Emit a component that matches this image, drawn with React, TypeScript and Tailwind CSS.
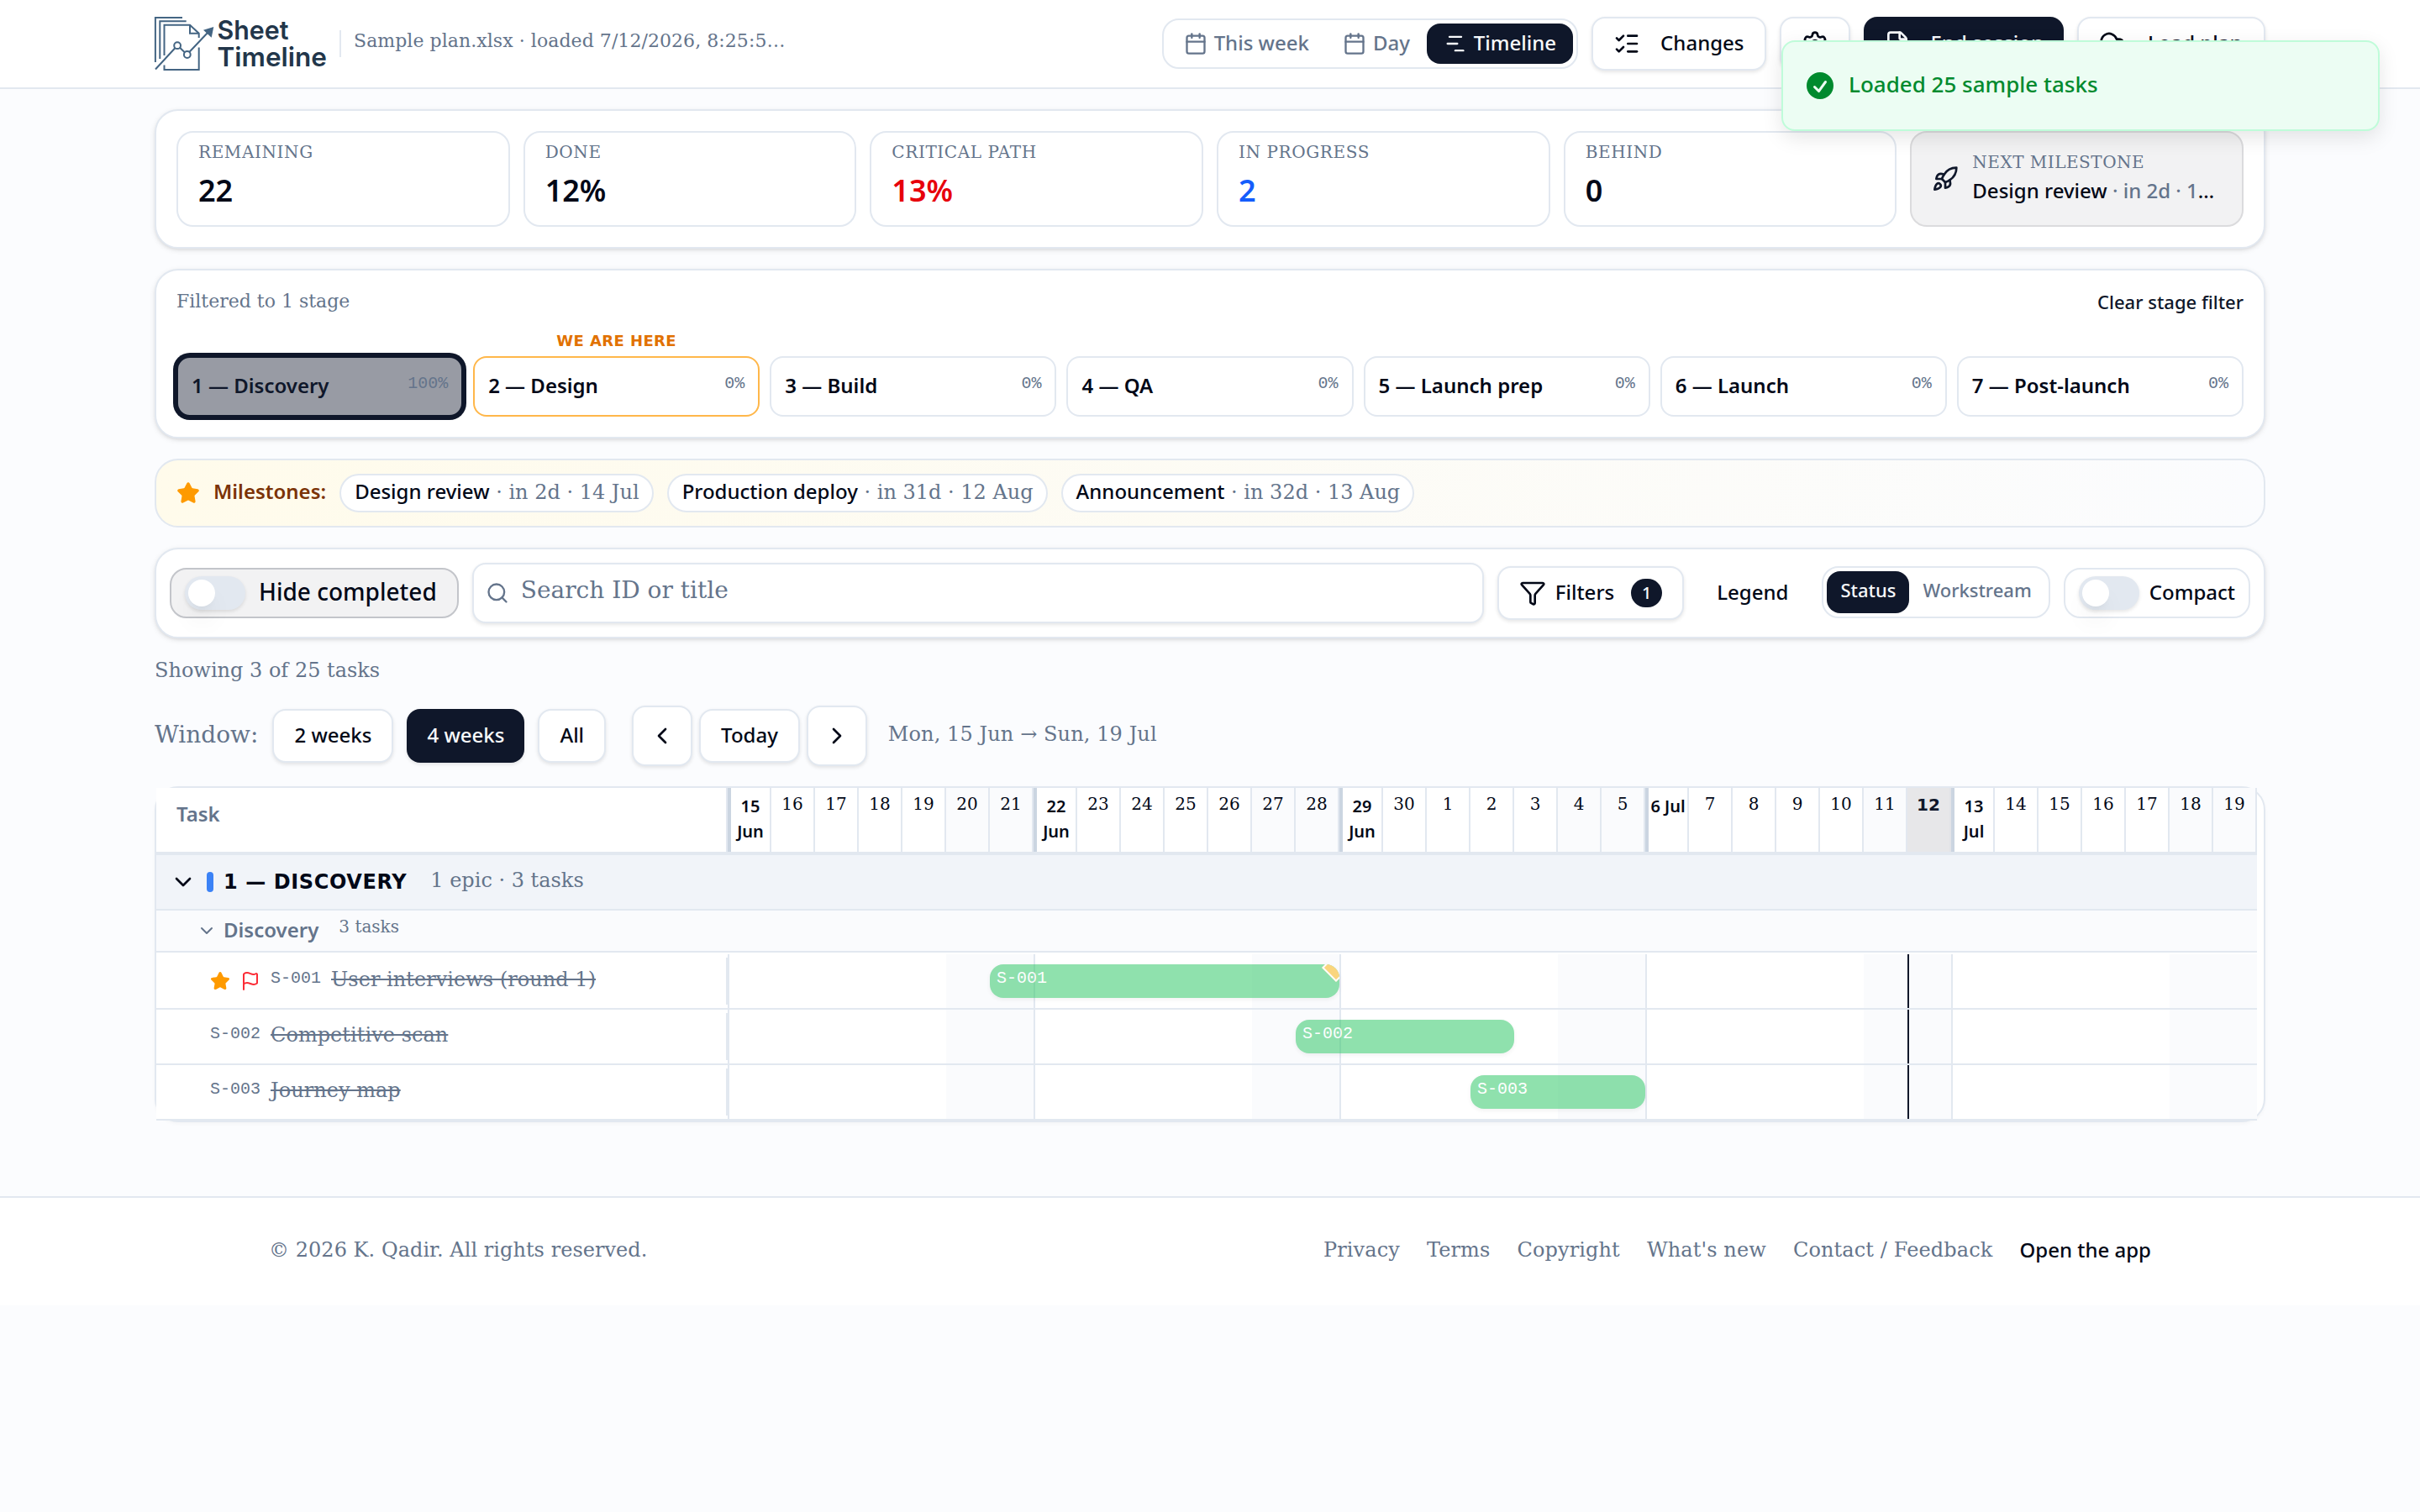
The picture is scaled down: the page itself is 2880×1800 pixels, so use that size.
import React from 'react';
import {
  Calendar, ChartNoAxesGantt, ListChecks, Settings, FileX, CloudUpload, Rocket, Star,
  Search, Funnel, ChevronLeft, ChevronRight, ChevronDown, Flag,
} from 'lucide-react';

const SERIF = "font-['DejaVu_Serif',serif]";
const MONO = "font-['Liberation_Mono',monospace]";
const BOLD = "font-['DejaVu_Sans',sans-serif] font-bold";

function Logo() {
  return (
    <svg width="204" height="64" viewBox="0 0 204 64" className="shrink-0 overflow-visible" fill="none" stroke="#446583" strokeWidth="2">
      <path d="M.9 54V.9H33" />
      <path d="M6.3 50V5.2h31.4" />
      <path d="M11.5 46V9.7h30.5l10.7 10V25" />
      <path d="M42 9.7v10h10.7" />
      <path d="M11.5 57.5v5.6h41.2V36.5" />
      <path d="M1 62.5 24.5 37M29.8 36.6l6.2 5.8M41.5 41.8 64 18" />
      <circle cx="27.1" cy="34.2" r="3.9" />
      <circle cx="38.8" cy="45" r="3.9" />
      <path d="m70.3 12-12.3 3.7 9.7 9z" fill="#446583" stroke="none" />
      <text x="74.5" y="27" fontFamily="Inter, sans-serif" fontSize="31.5" fontWeight="600" fill="#22364a" stroke="none" textLength="85" lengthAdjust="spacingAndGlyphs">Sheet</text>
      <text x="74.5" y="58.8" fontFamily="Inter, sans-serif" fontSize="31.5" fontWeight="600" fill="#22364a" stroke="none" textLength="130.5" lengthAdjust="spacingAndGlyphs">Timeline</text>
    </svg>
  );
}

function Header() {
  return (
    <header className="h-[106px] border-b-2 border-[#e2e8f0] bg-white">
      <div className="mx-auto flex h-[104px] w-[2512px] items-center justify-between">
        <div className="flex items-center gap-4">
          <Logo />
          <div className="h-8 w-0.5 bg-[#e2e8f0]" />
          <div className={`-ml-px pb-[7px] text-[22px] leading-8 tracking-[0.06px] whitespace-nowrap text-[#64748b] ${SERIF}`}>Sample plan.xlsx · loaded 7/12/2026, 8:25:5…</div>
        </div>
        <div className="flex items-center gap-4 font-medium">
          <div className="flex h-[60px] rounded-[20px] border-2 border-[#e2e8f0] p-1 text-[#64748b]">
            <div className="flex items-center gap-2 px-5"><Calendar size={28} /><span className="pb-[2px]">This week</span></div>
            <div className="flex items-center gap-2 px-5"><Calendar size={28} /><span className="pb-[2px]">Day</span></div>
            <div className="flex items-center gap-2 rounded-2xl bg-[#0f172a] px-5 text-[#f8fafc]"><ChartNoAxesGantt size={28} /><span className="pb-[2px]">Timeline</span></div>
          </div>
          <div className="flex h-16 items-center gap-6 rounded-2xl border-2 border-[#e2e8f0] bg-white px-6 shadow-[0_2px_4px_rgba(0,0,0,0.1)]"><ListChecks size={32} /><span className="pb-[2px]">Changes</span></div>
          <div className="flex h-16 items-center rounded-2xl border-2 border-[#e2e8f0] bg-white px-6 shadow-[0_2px_4px_rgba(0,0,0,0.1)]"><Settings size={32} /></div>
          <div className="flex h-16 items-center gap-6 rounded-2xl bg-[#0f172a] px-6 text-[#f8fafc] shadow-[0_2px_4px_rgba(0,0,0,0.1)]"><FileX size={32} /><span className="pb-[2px]">End session</span></div>
          <div className="flex h-16 w-[224px] items-center gap-[26px] rounded-2xl border-2 border-[#e2e8f0] bg-white px-6 shadow-[0_2px_4px_rgba(0,0,0,0.1)]"><CloudUpload size={32} className="shrink-0" /><span className="pb-[2px] whitespace-nowrap">Load plan</span></div>
        </div>
      </div>
    </header>
  );
}

function Toast() {
  return (
    <div className="absolute top-[48px] right-[48px] flex h-[108px] w-[712px] items-center rounded-2xl border-2 border-[#bffcd9] bg-[#ecfdf3] pl-6 text-[#008a2e] shadow-[0_8px_24px_rgba(0,0,0,0.1)]">
      <svg width="40" height="40" viewBox="0 0 20 20" fill="currentColor">
        <path fillRule="evenodd" clipRule="evenodd" d="M10 18a8 8 0 100-16 8 8 0 000 16zm3.857-9.809a.75.75 0 00-1.214-.882l-3.483 4.79-1.88-1.88a.75.75 0 10-1.06 1.061l2.5 2.5a.75.75 0 001.137-.089l4-5.5z" />
      </svg>
      <span className="ml-[14px] pb-[4px] text-[26px] leading-[39px] font-medium">Loaded 25 sample tasks</span>
    </div>
  );
}

const CARD = 'rounded-[28px] border-2 border-[#e2e8f0] bg-white shadow-[0_2px_6px_rgba(0,0,0,0.1),0_2px_4px_-2px_rgba(0,0,0,0.1)]';

const stats = [
  { label: 'REMAINING', value: '22', color: 'text-[#020817]' },
  { label: 'DONE', value: '12%', color: 'text-[#020817]' },
  { label: 'CRITICAL PATH', value: '13%', color: 'text-[#e7000b]' },
  { label: 'IN PROGRESS', value: '2', color: 'text-[#155dfc]' },
  { label: 'BEHIND', value: '0', color: 'text-[#020817]' },
];

function Stats() {
  return (
    <section className={`grid grid-cols-6 gap-4 p-6 ${CARD}`}>
      {stats.map((s) => (
        <div key={s.label} className="h-[114px] rounded-[20px] border-2 border-[#e2e8f0] px-6 pt-2">
          <div className={`text-[20px] leading-[30px] tracking-[0.6px] text-[#64748b] ${SERIF}`}>{s.label}</div>
          <div className={`mt-[3px] text-[36px] leading-[56px] font-semibold ${s.color}`}>{s.value}</div>
        </div>
      ))}
      <div className="flex h-[114px] items-center gap-4 rounded-[20px] border-2 border-[#dbdbdd] bg-[#f2f2f3] px-6">
        <Rocket size={32} className="shrink-0 text-[#0f172a]" />
        <div className="pb-[3px]">
          <div className={`text-[20px] leading-[30px] tracking-[0.5px] text-[#64748b] ${SERIF}`}>NEXT MILESTONE</div>
          <div className="pt-px leading-9 font-medium whitespace-nowrap">Design review <span className="text-[#64748b]">· in 2d · 1</span>…</div>
        </div>
      </div>
    </section>
  );
}

const stages = ['1 — Discovery', '2 — Design', '3 — Build', '4 — QA', '5 — Launch prep', '6 — Launch', '7 — Post-launch'];

function Stages() {
  return (
    <section className={`h-[202px] px-6 pt-6 ${CARD}`}>
      <div className="flex h-7 items-center justify-between text-[22px]">
        <span className={`pb-[3px] text-[#64748b] ${SERIF}`}>Filtered to 1 stage</span>
        <span className="pb-[2px] font-medium text-[#0f172a]">Clear stage filter</span>
      </div>
      <div className="mt-5 grid grid-cols-7 gap-3">
        {stages.map((s, i) => (
          <div key={s}>
            <div className={`h-6 text-center text-[18px] leading-6 tracking-[0.4px] text-[#e17100] ${BOLD}`}>{i === 1 ? 'WE ARE HERE' : ''}</div>
            <div className={`mt-1.5 flex h-[72px] items-center justify-between rounded-2xl border-2 px-4 ${i === 0 ? 'border-[#0f172a] bg-[#989ba4] ring-4 ring-[#0f172a]' : i === 1 ? 'border-[#ffb74a]' : 'border-[#e2e8f0]'}`}>
              <span className={`pb-[2px] font-semibold ${i === 0 ? 'text-[#0f172a]' : ''}`}>{s}</span>
              <span className={`pb-[6px] text-[20px] text-[#64748b] ${MONO}`}>{i === 0 ? '100%' : '0%'}</span>
            </div>
          </div>
        ))}
      </div>
    </section>
  );
}

const milestones = [['Design review', 'in 2d · 14 Jul'], ['Production deploy', 'in 31d · 12 Aug'], ['Announcement', 'in 32d · 13 Aug']];

function Milestones() {
  return (
    <section className="flex h-[82px] items-center gap-4 rounded-[28px] border-2 border-[#e2e8f0] bg-linear-to-r from-[#fffbeb] to-[#fbfcfe] px-6">
      <Star size={28} fill="#fe9a00" className="text-[#fe9a00]" />
      <span className="pb-[4px] font-semibold text-[#7b3306]">Milestones:</span>
      {milestones.map(([name, when]) => (
        <div key={name} className="flex h-[46px] items-center rounded-full border-2 border-[#e2e8f0] bg-white pr-[15px] pl-4">
          <span className="pb-[3px] whitespace-pre"><span className="font-medium">{name}</span><span className={`text-[#64748b] ${SERIF}`}> · {when}</span></span>
        </div>
      ))}
    </section>
  );
}

function Switch() {
  return (
    <div className="flex h-10 w-[72px] items-center rounded-full bg-[#e2e8f0] p-1 shadow-[0_2px_4px_rgba(0,0,0,0.1)]">
      <div className="h-8 w-8 rounded-full bg-white shadow-[0_20px_30px_-6px_rgba(0,0,0,0.1),0_8px_12px_-8px_rgba(0,0,0,0.1)]" />
    </div>
  );
}

function Toolbar() {
  return (
    <section className={`flex h-[108px] items-center gap-4 px-4 font-medium ${CARD}`}>
      <div className="flex h-[60px] items-center gap-4 rounded-[20px] border-2 border-[#c3c5ca] bg-[#f2f2f3] pr-6 pl-4">
        <Switch />
        <span className="pb-[5px] text-[28px]">Hide completed</span>
      </div>
      <div className="flex h-[72px] grow items-center gap-[14px] rounded-2xl border-2 border-[#e2e8f0] bg-white pl-[14px] text-[#64748b] shadow-[0_2px_4px_rgba(0,0,0,0.1)]">
        <Search size={28} />
        <span className={`pb-[6px] text-[28px] font-normal ${SERIF}`}>Search ID or title</span>
      </div>
      <div className="-mr-px flex h-16 items-center rounded-2xl border-2 border-[#e2e8f0] bg-white px-6 shadow-[0_2px_4px_rgba(0,0,0,0.1)]">
        <Funnel size={32} />
        <span className="ml-[11px] pb-[2px]">Filters</span>
        <span className="ml-5 flex h-[34px] w-[37px] items-center justify-center rounded-full bg-[#0f172a] pb-px text-[20px] text-[#f8fafc]">1</span>
      </div>
      <div className="px-6 pb-[2px]">Legend</div>
      <div className="mb-[2px] flex h-[62px] rounded-[20px] border-2 border-[#e2e8f0] p-1 text-[22px] text-[#64748b]">
        <div className="flex items-center rounded-2xl bg-[#0f172a] px-4 text-[#f8fafc]"><span className="pb-[7px]">Status</span></div>
        <div className="flex items-center px-4"><span className="pb-[7px]">Workstream</span></div>
      </div>
      <div className="flex h-[60px] items-center gap-3 rounded-[20px] border-2 border-[#e2e8f0] px-4">
        <Switch />
        <span className="pb-[2px]">Compact</span>
      </div>
    </section>
  );
}

const BTN = 'flex items-center justify-center rounded-2xl border-2 border-[#e2e8f0] bg-white shadow-[0_2px_4px_rgba(0,0,0,0.1)]';

function WindowBar() {
  return (
    <div className="mt-6 flex h-[72px] items-center font-medium">
      <span className={`mr-[17px] pb-[2px] text-[28px] font-normal text-[#64748b] ${SERIF}`}>Window:</span>
      <div className={`mr-4 h-16 px-6 ${BTN}`}><span className="pb-[2px]">2 weeks</span></div>
      <div className="mr-4 flex h-16 items-center rounded-2xl bg-[#0f172a] px-6 text-[#f8fafc] shadow-[0_2px_4px_rgba(0,0,0,0.1)]"><span className="pb-[2px]">4 weeks</span></div>
      <div className={`mr-[31px] h-16 px-6 ${BTN}`}><span className="pb-[2px]">All</span></div>
      <div className={`mr-2 h-[72px] w-[72px] ${BTN}`}><ChevronLeft size={32} /></div>
      <div className={`mr-2 h-16 px-6 ${BTN}`}><span className="pb-[2px]">Today</span></div>
      <div className={`mr-6 h-[72px] w-[72px] ${BTN}`}><ChevronRight size={32} /></div>
      <span className={`pb-[4px] pl-px font-normal tracking-[0.1px] text-[#64748b] ${SERIF}`}>Mon, 15 Jun → Sun, 19 Jul</span>
    </div>
  );
}

const days = Array.from({ length: 35 }, (_, i) => ({
  i,
  label: i < 16 ? 15 + i : i - 15,
  month: i < 16 ? 'Jun' : 'Jul',
  monday: i % 7 === 0,
  weekend: i % 7 > 4,
  today: i === 27,
}));

const tasks = [
  { id: 'S-001', title: 'User interviews (round 1)', flagged: true, bar: 'ml-[312px] w-[416px]' },
  { id: 'S-002', title: 'Competitive scan', flagged: false, bar: 'ml-[676px] w-[260px]' },
  { id: 'S-003', title: 'Journey map', flagged: false, bar: 'ml-[884px] w-[208px]' },
];

function Timeline() {
  return (
    <section className="mt-6 h-[400px] rounded-[28px] border-2 border-[#e2e8f0] bg-white shadow-[0_2px_4px_rgba(0,0,0,0.03)]">
      <div className="w-[2500px]">
        <div className="flex h-20 border-b-4 border-[#e2e8f0] bg-white">
          <div className="w-[680px] border-r-2 border-[#e2e8f0] pt-[13px] pl-6 leading-9 font-semibold text-[#64748b]">Task</div>
          {days.map((d) => (
            <div
              key={d.i}
              className={`w-[52px] border-r-2 text-center text-[20px] leading-[30px] ${
                d.monday
                  ? 'border-r-[#e2e8f0] border-l-4 border-l-[#cbd5e1] pt-[7px] font-semibold'
                  : d.today
                    ? `border-r-[#e2e3e8] bg-[#e7e7e9] pt-[5px] text-[#0f172a] ${BOLD}`
                    : `border-[#e2e8f0] pt-1 ${SERIF} ${d.weekend ? 'bg-[#fafbfd]' : ''}`
              }`}
            >
              {d.monday ? `${d.label} ${d.month}` : d.label}
            </div>
          ))}
        </div>
        <div className="flex h-[66px] items-center border-b-2 border-[#e2e8f0] bg-[#f1f4f9] pl-4">
          <ChevronDown size={32} />
          <div className="ml-3 h-6 w-2 rounded bg-[#3b82f6]" />
          <span className={`ml-3 tracking-[0.6px] ${BOLD}`}>1 — DISCOVERY</span>
          <span className={`ml-7 pb-[4px] text-[#64748b] ${SERIF}`}>1 epic · 3 tasks</span>
        </div>
        <div className="flex h-[50px] items-center border-b-2 border-[#e2e8f0] bg-[#fafbfd] pl-12 text-[#64748b]">
          <ChevronDown size={24} />
          <span className="ml-2 pb-[3px] font-semibold">Discovery</span>
          <span className={`ml-6 pb-[10px] text-[20px] ${SERIF}`}>3 tasks</span>
        </div>
        <div className="pt-0.5">
          {tasks.map((t) => (
            <div key={t.id} className="flex h-[66px] border-b-2 border-[#e2e8f0] bg-white">
              <div className="mt-1 flex h-14 w-[680px] items-center gap-3 border-r-2 border-[#e2e8f0] pl-16 text-[#64748b]">
                {t.flagged && <Star size={24} fill="#fe9a00" className="text-[#fe9a00]" />}
                {t.flagged && <Flag size={24} className="text-[#fb2c36]" />}
                <span className={`pb-[6px] text-[20px] ${MONO}`}>{t.id}</span>
                <span className={`pb-[4px] tracking-[0.04px] line-through ${SERIF}`}>{t.title}</span>
              </div>
              <div className="relative flex h-16 w-[1820px]">
                {days.map((d) => (
                  <div key={d.i} className={`w-[52px] ${d.weekend ? 'bg-[#fafbfd]' : ''} ${d.monday ? 'border-l-2 border-[#e2e8f0]' : ''} ${d.today ? 'border-l-2 border-[#0f172a]' : ''}`} />
                ))}
                <div className="absolute inset-0 flex items-center">
                  <div className={`relative flex h-10 items-center overflow-hidden rounded-2xl bg-[#22c55e] px-2 text-[20px] text-white opacity-50 shadow-[0_2px_4px_rgba(0,0,0,0.1)] ${t.bar}`}>
                    <span className={`pb-[6px] ${MONO}`}>{t.id}</span>
                    {t.flagged && <div className="absolute -top-2 -right-2 h-6 w-6 rotate-45 border-2 border-white bg-[#fbb000]" />}
                  </div>
                </div>
              </div>
            </div>
          ))}
        </div>
      </div>
    </section>
  );
}

function Footer() {
  return (
    <footer className="mt-[88px] h-[130px] border-t-2 border-[#e2e8f0] bg-white">
      <div className={`mx-auto flex h-[128px] w-[2240px] items-center justify-between pb-1 text-[#64748b] ${SERIF}`}>
        <span className="tracking-[0.04px]">© 2026 K. Qadir. All rights reserved.</span>
        <div className="flex items-center gap-8 tracking-[0.12px]">
          <span>Privacy</span>
          <span>Terms</span>
          <span>Copyright</span>
          <span>What's new</span>
          <span>Contact / Feedback</span>
          <span className="font-['Noto_Sans',sans-serif] font-medium tracking-normal text-[#020817]">Open the app</span>
        </div>
      </div>
    </footer>
  );
}

export default function App() {
  return (
    <div className="relative h-[1800px] w-[2880px] overflow-hidden bg-[#fbfcfe] font-['Noto_Sans',sans-serif] text-[24px] leading-8 text-[#020817]">
      <Header />
      <main className="mx-auto w-[2512px] pt-6">
        <div className="flex flex-col gap-6">
          <Stats />
          <Stages />
          <Milestones />
          <Toolbar />
          <div className={`h-8 pb-1 leading-7 text-[#64748b] ${SERIF}`}>Showing 3 of 25 tasks</div>
        </div>
        <WindowBar />
        <Timeline />
      </main>
      <Footer />
      <Toast />
    </div>
  );
}
